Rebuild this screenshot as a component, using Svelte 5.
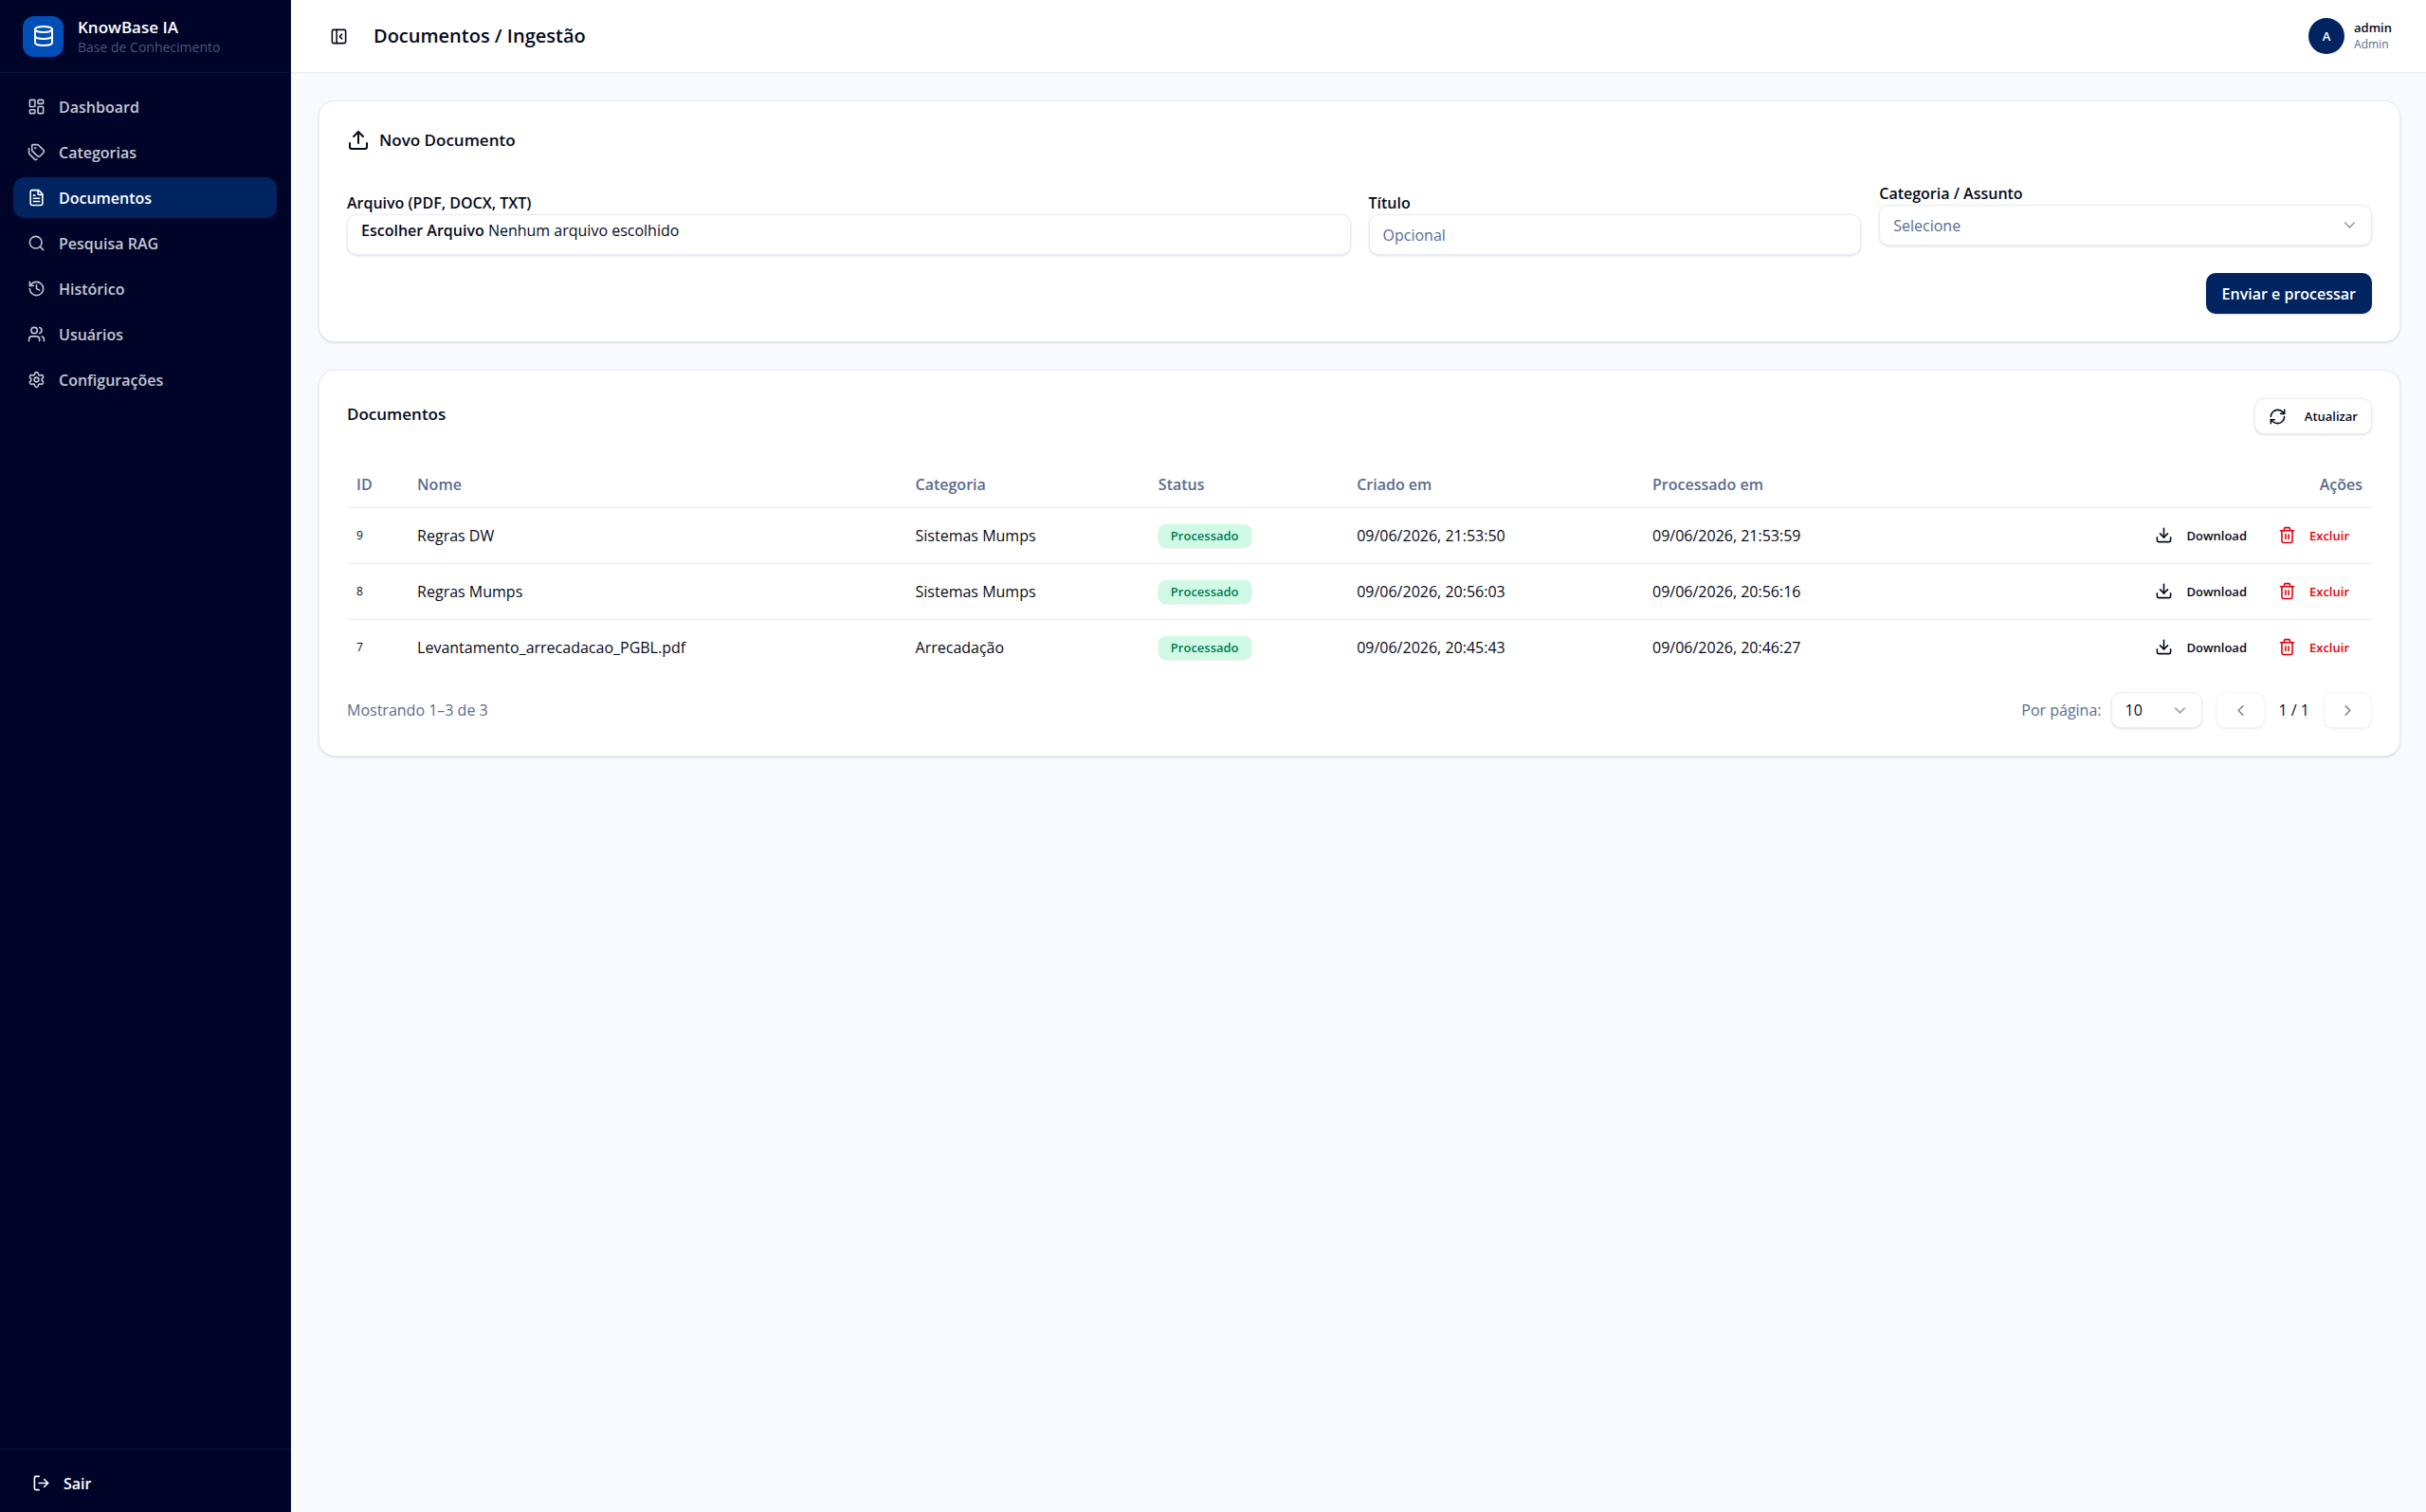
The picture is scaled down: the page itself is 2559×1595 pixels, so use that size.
<script lang="ts">
	type Doc = {
		id: number;
		name: string;
		category: string;
		status: string;
		created: string;
		processed: string;
	};

	const icons: Record<string, string> = {
		database:
			'<ellipse cx="12" cy="5" rx="9" ry="3"/><path d="M3 5v14a9 3 0 0 0 18 0V5"/><path d="M3 12a9 3 0 0 0 18 0"/>',
		dashboard:
			'<rect x="3" y="3" width="7" height="9" rx="1"/><rect x="14" y="3" width="7" height="5" rx="1"/><rect x="14" y="12" width="7" height="9" rx="1"/><rect x="3" y="16" width="7" height="5" rx="1"/>',
		tags:
			'<path d="M13.172 2a2 2 0 0 1 1.414.586l6.71 6.71a2.4 2.4 0 0 1 0 3.408l-4.592 4.592a2.4 2.4 0 0 1-3.408 0l-6.71-6.71A2 2 0 0 1 6 9.172V3a1 1 0 0 1 1-1z"/><path d="M2 7v6.172a2 2 0 0 0 .586 1.414l6.71 6.71a2.4 2.4 0 0 0 3.191.193"/><circle cx="10.5" cy="6.5" r=".5" fill="currentColor"/>',
		file:
			'<path d="M6 22a2 2 0 0 1-2-2V4a2 2 0 0 1 2-2h8a2.4 2.4 0 0 1 1.704.706l3.588 3.588A2.4 2.4 0 0 1 20 8v12a2 2 0 0 1-2 2z"/><path d="M14 2v5a1 1 0 0 0 1 1h5"/><path d="M10 9H8"/><path d="M16 13H8"/><path d="M16 17H8"/>',
		search: '<circle cx="11" cy="11" r="8"/><path d="m21 21-4.34-4.34"/>',
		history:
			'<path d="M3 12a9 9 0 1 0 9-9 9.75 9.75 0 0 0-6.74 2.74L3 8"/><path d="M3 3v5h5"/><path d="M12 7v5l4 2"/>',
		users:
			'<path d="M16 21v-2a4 4 0 0 0-4-4H6a4 4 0 0 0-4 4v2"/><path d="M16 3.128a4 4 0 0 1 0 7.744"/><path d="M22 21v-2a4 4 0 0 0-3-3.87"/><circle cx="9" cy="7" r="4"/>',
		settings:
			'<path d="M9.671 4.136a2.34 2.34 0 0 1 4.659 0 2.34 2.34 0 0 0 3.319 1.915 2.34 2.34 0 0 1 2.33 4.033 2.34 2.34 0 0 0 0 3.831 2.34 2.34 0 0 1-2.33 4.033 2.34 2.34 0 0 0-3.319 1.915 2.34 2.34 0 0 1-4.659 0 2.34 2.34 0 0 0-3.32-1.915 2.34 2.34 0 0 1-2.33-4.033 2.34 2.34 0 0 0 0-3.831A2.34 2.34 0 0 1 6.35 6.051a2.34 2.34 0 0 0 3.319-1.915"/><circle cx="12" cy="12" r="3"/>',
		logout:
			'<path d="m16 17 5-5-5-5"/><path d="M21 12H9"/><path d="M9 21H5a2 2 0 0 1-2-2V5a2 2 0 0 1 2-2h4"/>',
		panel:
			'<rect x="3" y="3" width="18" height="18" rx="2"/><path d="M9 3v18"/><path d="m16 15-3-3 3-3"/>',
		upload:
			'<path d="M12 3v12"/><path d="m17 8-5-5-5 5"/><path d="M21 15v4a2 2 0 0 1-2 2H5a2 2 0 0 1-2-2v-4"/>',
		download:
			'<path d="M12 15V3"/><path d="m7 10 5 5 5-5"/><path d="M21 15v4a2 2 0 0 1-2 2H5a2 2 0 0 1-2-2v-4"/>',
		refresh:
			'<path d="M3 12a9 9 0 0 1 9-9 9.75 9.75 0 0 1 6.74 2.74L21 8"/><path d="M21 3v5h-5"/><path d="M21 12a9 9 0 0 1-9 9 9.75 9.75 0 0 1-6.74-2.74L3 16"/><path d="M8 16H3v5"/>',
		trash:
			'<path d="M10 11v6"/><path d="M14 11v6"/><path d="M19 6v14a2 2 0 0 1-2 2H7a2 2 0 0 1-2-2V6"/><path d="M3 6h18"/><path d="M8 6V4a2 2 0 0 1 2-2h4a2 2 0 0 1 2 2v2"/>',
		down: '<path d="m6 9 6 6 6-6"/>',
		left: '<path d="m15 18-6-6 6-6"/>',
		right: '<path d="m9 18 6-6-6-6"/>'
	};

	const nav = [
		{ label: 'Dashboard', icon: 'dashboard' },
		{ label: 'Categorias', icon: 'tags' },
		{ label: 'Documentos', icon: 'file' },
		{ label: 'Pesquisa RAG', icon: 'search' },
		{ label: 'Histórico', icon: 'history' },
		{ label: 'Usuários', icon: 'users' },
		{ label: 'Configurações', icon: 'settings' }
	];

	const docs: Doc[] = [
		{
			id: 9,
			name: 'Regras DW',
			category: 'Sistemas Mumps',
			status: 'Processado',
			created: '09/06/2026, 21:53:50',
			processed: '09/06/2026, 21:53:59'
		},
		{
			id: 8,
			name: 'Regras Mumps',
			category: 'Sistemas Mumps',
			status: 'Processado',
			created: '09/06/2026, 20:56:03',
			processed: '09/06/2026, 20:56:16'
		},
		{
			id: 7,
			name: 'Levantamento_arrecadacao_PGBL.pdf',
			category: 'Arrecadação',
			status: 'Processado',
			created: '09/06/2026, 20:45:43',
			processed: '09/06/2026, 20:46:27'
		}
	];

	let active = $state('Documentos');
	let collapsed = $state(false);
	let fileName = $state('');
	let title = $state('');
	let category = $state('');
	let perPage = $state('10');
</script>

{#snippet icon(name: string)}
	<svg class="icon" viewBox="0 0 24 24" aria-hidden="true">{@html icons[name]}</svg>
{/snippet}

<div class="app">
	{#if !collapsed}
		<aside class="sidebar">
			<div class="brand">
				<span class="logo">{@render icon('database')}</span>
				<div>
					<p class="brand-name">KnowBase IA</p>
					<p class="brand-sub">Base de Conhecimento</p>
				</div>
			</div>
			<nav>
				{#each nav as item}
					<a
						href="#{item.icon}"
						class:active={active === item.label}
						onclick={() => (active = item.label)}
					>
						{@render icon(item.icon)}
						{item.label}
					</a>
				{/each}
			</nav>
			<div class="sidebar-footer">
				<button class="logout">{@render icon('logout')}Sair</button>
			</div>
		</aside>
	{/if}

	<div class="content">
		<header>
			<button class="toggle" aria-label="Alternar menu" onclick={() => (collapsed = !collapsed)}>
				{@render icon('panel')}
			</button>
			<h1>Documentos / Ingestão</h1>
			<div class="user">
				<span class="avatar">A</span>
				<div>
					<p class="user-name">admin</p>
					<p class="user-role">Admin</p>
				</div>
			</div>
		</header>

		<main>
			<section class="card">
				<h2 class="with-icon">{@render icon('upload')}Novo Documento</h2>
				<form onsubmit={(e) => e.preventDefault()}>
					<div class="field wide">
						<label for="file">Arquivo (PDF, DOCX, TXT)</label>
						<div class="control file">
							<strong>Escolher Arquivo</strong>
							<span>{fileName || 'Nenhum arquivo escolhido'}</span>
							<input
								id="file"
								type="file"
								accept=".pdf,.docx,.txt"
								onchange={(e) => (fileName = e.currentTarget.files?.[0]?.name ?? '')}
							>
						</div>
					</div>
					<div class="field">
						<label for="title">Título</label>
						<input id="title" class="control" type="text" placeholder="Opcional" bind:value={title}>
					</div>
					<div class="field raised">
						<label for="category">Categoria / Assunto</label>
						<div class="select">
							<select id="category" class="control" class:empty={!category} bind:value={category}>
								<option value="">Selecione</option>
								<option>Sistemas Mumps</option>
								<option>Arrecadação</option>
							</select>
							{@render icon('down')}
						</div>
					</div>
					<div class="submit">
						<button class="primary" type="submit">Enviar e processar</button>
					</div>
				</form>
			</section>

			<section class="card">
				<div class="card-head">
					<h2>Documentos</h2>
					<button class="outline refresh">{@render icon('refresh')}Atualizar</button>
				</div>
				<table>
					<colgroup>
						<col class="c-id">
						<col class="c-name">
						<col class="c-category">
						<col class="c-status">
						<col class="c-created">
						<col class="c-processed">
						<col>
					</colgroup>
					<thead>
						<tr>
							<th>ID</th>
							<th>Nome</th>
							<th>Categoria</th>
							<th>Status</th>
							<th>Criado em</th>
							<th>Processado em</th>
							<th class="right">Ações</th>
						</tr>
					</thead>
					<tbody>
						{#each docs as doc (doc.id)}
							<tr>
								<td class="id">{doc.id}</td>
								<td>{doc.name}</td>
								<td>{doc.category}</td>
								<td><span class="badge">{doc.status}</span></td>
								<td>{doc.created}</td>
								<td>{doc.processed}</td>
								<td>
									<div class="actions">
										<button class="ghost">{@render icon('download')}Download</button>
										<button class="ghost danger">{@render icon('trash')}Excluir</button>
									</div>
								</td>
							</tr>
						{/each}
					</tbody>
				</table>
				<div class="pagination">
					<p class="muted">Mostrando 1–3 de 3</p>
					<label class="muted" for="per-page">Por página:</label>
					<div class="select per-page">
						<select id="per-page" class="control" bind:value={perPage}>
							<option>10</option>
							<option>20</option>
							<option>50</option>
						</select>
						{@render icon('down')}
					</div>
					<div class="pager">
						<button class="outline" aria-label="Anterior" disabled>{@render icon('left')}</button>
						<span>1 / 1</span>
						<button class="outline" aria-label="Próxima" disabled>{@render icon('right')}</button>
					</div>
				</div>
			</section>
		</main>
	</div>
</div>

<style>
	:global(body) {
		margin: 0;
	}
	.app {
		--navy: #00245f;
		--fg: #060b1c;
		--muted: #5a6c8f;
		--border: #e8ecf4;
		--shadow: 0 1px 3px rgba(0, 0, 0, 0.1), 0 1px 2px -1px rgba(0, 0, 0, 0.1);
		display: flex;
		min-height: 100vh;
		background: #f8faff;
		color: var(--fg);
		font: 16px/24px "Open Sans", "Noto Sans", sans-serif;
	}
	.app :global(*) {
		box-sizing: border-box;
	}
	h1,
	h2,
	p {
		margin: 0;
	}
	button,
	input,
	select {
		font: inherit;
		color: inherit;
	}
	button {
		display: inline-flex;
		align-items: center;
		justify-content: center;
		border: 0;
		background: none;
		cursor: pointer;
	}
	.icon {
		width: 19px;
		height: 19px;
		flex: none;
		fill: none;
		stroke: currentColor;
		stroke-width: 2;
		stroke-linecap: round;
		stroke-linejoin: round;
	}

	.sidebar {
		display: flex;
		flex-direction: column;
		flex: none;
		width: 307px;
		background: #010429;
		border-right: 1px solid #04183a;
		color: #fff;
	}
	.brand {
		display: flex;
		align-items: center;
		gap: 15px;
		height: 77px;
		padding: 0 24px;
		border-bottom: 1px solid #04183a;
	}
	.logo {
		display: grid;
		place-items: center;
		width: 43px;
		height: 43px;
		border-radius: 12px;
		background: #004fb8;
	}
	.logo .icon {
		width: 24px;
		height: 24px;
	}
	.brand-name {
		font-size: 17px;
		line-height: 24px;
		font-weight: 600;
	}
	.brand-sub {
		font-size: 14px;
		line-height: 18px;
		color: #45577b;
	}
	nav {
		display: flex;
		flex-direction: column;
		gap: 5px;
		flex: 1;
		padding: 14px;
	}
	nav a {
		display: flex;
		align-items: center;
		gap: 14px;
		height: 43px;
		padding: 0 15px;
		border-radius: 12px;
		color: #c3c7d1;
		font-weight: 600;
		text-decoration: none;
	}
	nav a.active {
		background: var(--navy);
		color: #fff;
	}
	.sidebar-footer {
		padding: 14px 14px 9px;
		border-top: 1px solid #04183a;
	}
	.logout {
		gap: 14px;
		height: 43px;
		padding: 0 20px;
		font-weight: 600;
	}

	.content {
		flex: 1;
		min-width: 0;
	}
	header {
		display: flex;
		align-items: center;
		height: 77px;
		padding: 0 36px 0 29px;
		border-bottom: 1px solid var(--border);
		background: #fff;
	}
	.toggle {
		width: 43px;
		height: 43px;
		padding: 0;
	}
	h1 {
		margin-left: 15px;
		font-size: 20px;
		font-weight: 600;
	}
	.user {
		display: flex;
		align-items: center;
		gap: 10px;
		margin-left: auto;
	}
	.avatar {
		display: grid;
		place-items: center;
		width: 38px;
		height: 38px;
		border-radius: 50%;
		background: var(--navy);
		color: #fff;
		font-size: 13px;
		font-weight: 600;
	}
	.user-name {
		font-size: 13px;
		line-height: 18px;
		font-weight: 600;
	}
	.user-role {
		font-size: 12px;
		line-height: 18px;
		color: var(--muted);
	}

	main {
		display: flex;
		flex-direction: column;
		gap: 29px;
		padding: 29px 27px 29px 29px;
	}
	.card {
		padding: 29px;
		border: 1px solid var(--border);
		border-radius: 17px;
		background: #fff;
		box-shadow: var(--shadow);
	}
	h2 {
		font-size: 17px;
		font-weight: 600;
	}
	.with-icon {
		display: flex;
		align-items: center;
		gap: 10px;
	}
	.with-icon .icon {
		width: 24px;
		height: 24px;
	}
	form {
		display: grid;
		grid-template-columns: repeat(4, 1fr);
		align-items: end;
		gap: 19px;
		margin-top: 32px;
	}
	.field {
		display: flex;
		flex-direction: column;
	}
	.field label {
		font-weight: 600;
	}
	.wide {
		grid-column: span 2;
	}
	.raised {
		padding-bottom: 10px;
	}
	.control {
		width: 100%;
		height: 43px;
		padding: 0 14px;
		border: 1px solid var(--border);
		border-radius: 10px;
		background: #fff;
		box-shadow: var(--shadow);
	}
	.control::placeholder,
	.control.empty {
		color: var(--muted);
		opacity: 1;
	}
	.file {
		position: relative;
		padding-top: 4px;
	}
	.file strong {
		font-weight: 600;
	}
	.file input {
		position: absolute;
		inset: 0;
		width: 100%;
		opacity: 0;
		cursor: pointer;
	}
	.select {
		display: grid;
		align-items: center;
	}
	.select select,
	.select .icon {
		grid-area: 1 / 1;
	}
	.select select {
		appearance: none;
	}
	.select .icon {
		justify-self: end;
		margin-right: 14px;
		color: #9ba1ad;
		pointer-events: none;
	}
	.submit {
		grid-column: 1 / -1;
		display: flex;
		justify-content: flex-end;
	}
	.primary {
		height: 43px;
		padding: 0 17px;
		border-radius: 10px;
		background: var(--navy);
		box-shadow: var(--shadow);
		color: #fff;
		font-weight: 600;
	}

	.card-head {
		display: flex;
		align-items: flex-start;
		justify-content: space-between;
	}
	.card-head h2 {
		line-height: 34px;
	}
	.outline {
		height: 38px;
		padding: 0 14px;
		border: 1px solid var(--border);
		border-radius: 10px;
		background: #fff;
		box-shadow: var(--shadow);
	}
	.refresh {
		gap: 19px;
		font-size: 13px;
		font-weight: 600;
	}
	table {
		width: 100%;
		margin-top: 29px;
		border-collapse: collapse;
		table-layout: fixed;
	}
	.c-id {
		width: 3%;
	}
	.c-name {
		width: 24.6%;
	}
	.c-category {
		width: 12%;
	}
	.c-status {
		width: 9.8%;
	}
	.c-created {
		width: 14.6%;
	}
	.c-processed {
		width: 14.6%;
	}
	th {
		height: 48px;
		padding: 0 10px;
		color: var(--muted);
		font-weight: 600;
		text-align: left;
	}
	th.right {
		text-align: right;
	}
	td {
		height: 59px;
		padding: 0 10px;
	}
	tr {
		border-bottom: 1px solid var(--border);
	}
	tbody tr:last-child {
		border-bottom: 0;
	}
	.id {
		font-size: 12px;
	}
	.badge {
		display: inline-flex;
		align-items: center;
		height: 24px;
		padding: 0 13px;
		border-radius: 8px;
		background: #d0fae5;
		box-shadow: var(--shadow);
		color: #007a55;
		font-size: 13px;
		font-weight: 600;
	}
	.actions {
		display: flex;
		justify-content: flex-end;
		gap: 5px;
	}
	.ghost {
		gap: 14px;
		height: 38px;
		padding: 0 14px;
		font-size: 13px;
		font-weight: 600;
	}
	.danger {
		color: #e7000b;
	}
	.muted {
		color: var(--muted);
	}
	.pagination {
		display: flex;
		align-items: center;
		margin-top: 18px;
	}
	.pagination p {
		margin-right: auto;
	}
	.per-page {
		width: 96px;
		margin: 0 15px 0 10px;
	}
	.per-page .control {
		height: 38px;
	}
	.pager {
		display: flex;
		align-items: center;
		gap: 15px;
	}
	.pager .outline {
		padding: 0 15px;
	}
	.pager .outline:disabled {
		opacity: 0.5;
	}
</style>
